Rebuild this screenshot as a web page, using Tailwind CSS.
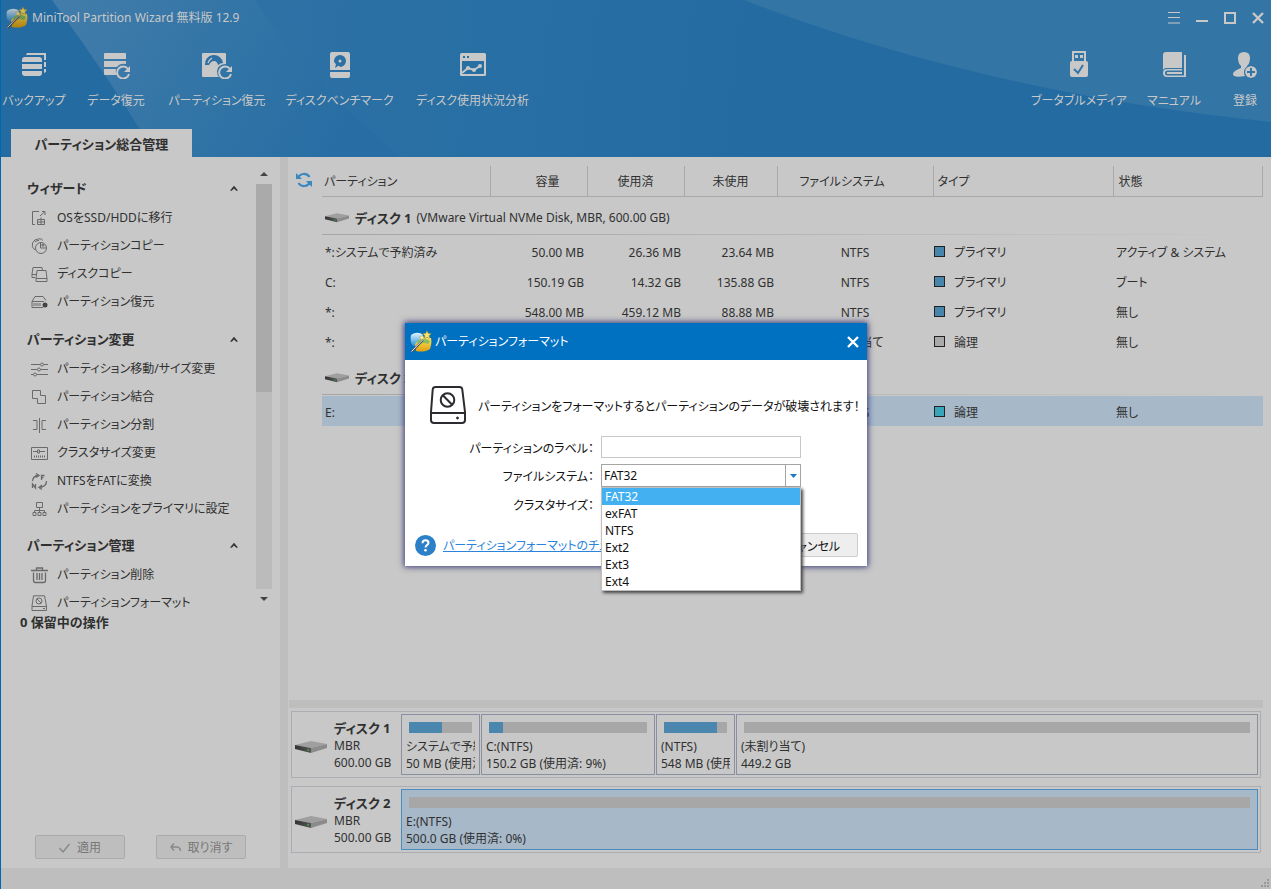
<!DOCTYPE html>
<html lang="ja">
<head>
<meta charset="utf-8">
<title>MiniTool Partition Wizard</title>
<script src="https://cdn.jsdelivr.net/npm/@tailwindcss/browser@4"></script>
</head>
<body class="flex h-screen flex-col overflow-hidden border-l border-[#0067b0] bg-[#c8c8c8] font-['Noto_Sans','Noto_Sans_CJK_JP',sans-serif] text-xs leading-4 text-[#303030] [font-feature-settings:'palt']">

<svg class="absolute h-0 w-0" aria-hidden="true">
  <defs>
    <linearGradient id="gold" x1="0" y1="0" x2="0" y2="1"><stop offset="0" stop-color="#ffe45c"/><stop offset="1" stop-color="#e0a010"/></linearGradient>
    <linearGradient id="sky" x1="0" y1="0" x2="0" y2="1"><stop offset="0" stop-color="#e2f4ff"/><stop offset="1" stop-color="#2a90dc"/></linearGradient>
    <linearGradient id="side" x1="0" y1="0" x2="1" y2="0"><stop offset="0" stop-color="#333"/><stop offset="1" stop-color="#555"/></linearGradient>
  </defs>
  <symbol id="logo" viewBox="0 0 22 22">
    <path d="M1 4c4-3 9-3 12 0v9L3 15c-2-2-3-7-2-11z" fill="url(#sky)"/>
    <path d="M5 13c4-5 10-7 16-6 1 4 0 8-1 11-4 3-10 3-14 2z" fill="url(#gold)"/>
    <path d="M7 10c4-3 9-3 13 0l-2 3c-4-2-7-1-10 1z" fill="#58b868" opacity=".7"/>
    <path d="M17 0l1.200 2.500 2.800.2-2 2 .6 2.800-2.600-1.300-2.400 1.400.4-2.800-2-2 2.800-.4z" fill="#ffe66a" stroke="#c89a20" stroke-width=".5"/>
    <path d="M12 4l.8 1.600 1.800.3-1.300 1.300.3 1.800-1.600-.9-1.600.9.3-1.800-1.300-1.300 1.800-.3z" fill="#fff0a0" stroke="#c89a20" stroke-width=".4"/>
    <path d="M1.500 21L13 9" stroke="#555" stroke-width="2"/><path d="M1.500 20.500L13 8.500" stroke="#e8e8e8" stroke-width="1"/>
  </symbol>
  <symbol id="drive" viewBox="0 0 32 13">
    <path d="M0 4L16 0l16 3-16 4z" fill="#9f9f9f"/>
    <path d="M0 4l16 3v5L0 8z" fill="url(#side)"/>
    <path d="M16 7l16-4v4L16 12z" fill="#8b8b8b"/>
    <circle cx="13" cy="9" r="1" fill="#3aa04a"/>
  </symbol>
  <symbol id="up" viewBox="0 0 8 6"><path d="M0 5.500L4 .8l4 4.700-1.800.3L4 3.500 1.800 5.800z" fill="#333"/></symbol>
</svg>

<header class="relative flex h-[157px] shrink-0 flex-col bg-[#236ba1] text-[#c8c8c8]">
  <svg class="absolute inset-0 h-full w-full" viewBox="0 0 1271 157" preserveAspectRatio="none" aria-hidden="true">
    <defs>
      <linearGradient id="beam" x1="50" y1="0" x2="330" y2="157" gradientUnits="userSpaceOnUse"><stop offset="0" stop-color="#437dab"/><stop offset=".5" stop-color="#3375a6"/><stop offset="1" stop-color="#286ea4"/></linearGradient>
      <linearGradient id="wash" x1="255" y1="0" x2="760" y2="60" gradientUnits="userSpaceOnUse"><stop offset="0" stop-color="#2e71a5"/><stop offset=".5" stop-color="#276fa4"/><stop offset="1" stop-color="#236ba1"/></linearGradient>
    </defs>
    <path d="M255 0H800V157H400Q315 90 255 0z" fill="url(#wash)"/>
    <path d="M51 0H255Q315 90 400 157H156Q110 80 51 0z" fill="url(#beam)"/>
    <path d="M743 0Q980 92 1271 122V0z" fill="#3375a5"/>
  </svg>
  <div class="relative flex h-[33px] items-center pl-[5px] pr-[7px] pt-[2px]">
    <svg class="h-[22px] w-[22px] brightness-80"><use href="#logo"/></svg>
    <h1 class="ml-1 text-xs">MiniTool Partition Wizard 無料版 12.9</h1>
    <div class="ml-auto flex gap-4">
      <button aria-label="メニュー"><svg class="h-3 w-3" viewBox="0 0 12 12"><path d="M0 .5h12M0 5.500h12M0 11h12" stroke="#c8c8c8"/></svg></button>
      <button aria-label="最小化"><svg class="h-3 w-3" viewBox="0 0 12 12"><path d="M0 9h12" stroke="#c8c8c8" stroke-width="2"/></svg></button>
      <button aria-label="最大化"><svg class="h-3 w-3" viewBox="0 0 12 12"><path d="M1 1h10v10H1z" fill="none" stroke="#c8c8c8" stroke-width="2"/></svg></button>
      <button aria-label="閉じる"><svg class="h-3 w-3" viewBox="0 0 12 12"><path d="M1 1l10 10M11 1L1 11" stroke="#c8c8c8" stroke-width="2.400"/></svg></button>
    </div>
  </div>
  <nav class="relative flex h-24 gap-[26px] whitespace-nowrap pl-[5px] pr-[6px] pt-[18px]">
    <button class="flex w-[56px] flex-col items-center gap-[14px]">
      <svg class="h-7 w-7" viewBox="0 0 28 28" fill="#c8c8c8"><path d="M2 9q0-3 3-3h14q3 0 3 3v2H2zM2 13h20v5H2zM2 20h20v2q0 3-3 3H5q-3 0-3-3z"/><path d="M7 2h19v7h-2V4H6zM24 11h2v5h-2zM24 18h2v3l-2 1z"/></svg>
      <span>バックアップ</span>
    </button>
    <button class="flex w-[56px] flex-col items-center gap-[14px]">
      <svg class="h-7 w-7" viewBox="0 0 28 28"><path d="M3 2h20q1 0 1 1v5H2V3q0-1 1-1zM2 10h22v3q-6-1-9 3H2zM2 18h12q-1 3 1 6H3q-1 0-1-1z" fill="#c8c8c8"/><path d="M26 18a6 6 0 1 0 1 5" fill="none" stroke="#c8c8c8" stroke-width="2"/><path d="M28 15v6h-6z" fill="#c8c8c8"/></svg>
      <span>データ復元</span>
    </button>
    <button class="flex w-[94px] flex-col items-center gap-[14px]">
      <svg class="h-7 w-[30px]" viewBox="0 0 30 28"><path d="M1 2h22q1 0 1 1v10q-8 0-9 7 0 4 2 6H1q-1 0-1-1V3q0-1 1-1z" fill="#c8c8c8"/><path d="M3 14a9 9 0 0 1 18-2q-3 0-5 2-1-4-4-4t-5 4z" fill="#2c70a4"/><path d="M6 12q1-3 4-5" stroke="#c8c8c8" stroke-width="1.500" fill="none"/><circle cx="12" cy="12" r="1.800" fill="#c8c8c8"/><path d="M28 18a6 6 0 1 0 1 5" fill="none" stroke="#c8c8c8" stroke-width="2"/><path d="M30 15v6h-6z" fill="#c8c8c8"/></svg>
      <span>パーティション復元</span>
    </button>
    <button class="flex w-[99px] flex-col items-center gap-[14px]">
      <svg class="h-7 w-5" viewBox="0 0 20 28"><path d="M2 1h16q2 0 2 2v16H0V3q0-2 2-2zM0 21h20v4q0 2-2 2H2q-2 0-2-2z" fill="#c8c8c8"/><path d="M4 10a6 6 0 1 1 6 6q-1-2-2-1l-3 2 1-4q-2-1-2-3z" fill="#2a70a4"/><circle cx="10" cy="10" r="1.500" fill="#c8c8c8"/></svg>
      <span>ディスクベンチマーク</span>
    </button>
    <button class="flex w-[115px] flex-col items-center gap-[14px]">
      <svg class="h-7 w-[26px]" viewBox="0 0 26 28"><path d="M1.500 2h23q1.500 0 1.500 1.500v20q0 1.500-1.500 1.500h-23Q0 25 0 23.500v-20Q0 2 1.500 2z" fill="#c8c8c8"/><path d="M3 5h2v2H3zM7 5h2v2H7zM2 10h22v13H2z" fill="#2870a4"/><path d="M2 22l6-5 6 2 6-4" fill="none" stroke="#c8c8c8" stroke-width="2"/><circle cx="8" cy="17" r="2" fill="#c8c8c8"/><circle cx="14" cy="19" r="2" fill="#c8c8c8"/><circle cx="20" cy="15" r="2" fill="#c8c8c8"/></svg>
      <span>ディスク使用状況分析</span>
    </button>
    <button class="ml-auto flex w-[88px] flex-col items-center gap-[14px]">
      <svg class="h-7 w-[18px]" viewBox="0 0 18 28"><path d="M2 0h14v11H2z" fill="#c8c8c8"/><path d="M4 2h10v8H4z" fill="#3375a5"/><path d="M5 4h3v3H5zM10 4h3v3h-3z" fill="#c8c8c8"/><path d="M2 10h14q2 0 2 2v12q0 2-2 2H2q-2 0-2-2V12q0-2 2-2z" fill="#c8c8c8"/><path d="M4 18l4 4 5-8" fill="none" stroke="#3375a5" stroke-width="2"/></svg>
      <span>ブータブルメディア</span>
    </button>
    <button class="flex w-[50px] flex-col items-center gap-[14px]">
      <svg class="h-7 w-6" viewBox="0 0 24 28" fill="#c8c8c8"><path d="M4 1h16v16H4q-2 0-3 2V4q0-3 3-3zM22 4h2v22H5q-4 0-4-4t4-4h15v1.500H5q-2 0-2 2.500t2 2.500h17z"/><path d="M5 21h15v2H5z"/></svg>
      <span>マニュアル</span>
    </button>
    <button class="flex w-[40px] flex-col items-center gap-[14px]">
      <svg class="h-7 w-6" viewBox="0 0 24 28"><path d="M11 1q6 0 6 6 0 5-3 8v2q-4 3-2 8-12 2-12-2 0-3 8-6v-2Q5 12 5 7q0-6 6-6z" fill="#c8c8c8"/><circle cx="18" cy="21" r="6" fill="#c8c8c8"/><circle cx="18" cy="21" r="6.500" fill="none" stroke="#3375a5"/><path d="M18 17v8M14 21h8" stroke="#3375a5" stroke-width="2"/></svg>
      <span>登録</span>
    </button>
  </nav>
  <div role="tablist" class="relative flex pl-[10px]">
    <button role="tab" aria-selected="true" class="h-7 w-[181px] whitespace-nowrap bg-[#c8c8c8] pt-[2px] text-[13px] font-bold text-[#303030]">パーティション総合管理</button>
  </div>
</header>

<div class="flex min-h-0 flex-1">
  <aside class="flex w-[279px] shrink-0 flex-col">
    <div class="flex h-[455px]">
      <div class="flex min-w-0 flex-1 flex-col overflow-hidden pt-[14px] [&_a]:flex [&_a]:h-7 [&_a]:shrink-0 [&_a]:items-center [&_a]:gap-[9px] [&_a]:whitespace-nowrap [&_a]:pl-[30px] [&_a]:pt-[2px] [&_h2]:flex [&_h2]:h-[30px] [&_h2]:shrink-0 [&_h2]:items-center [&_h2]:justify-between [&_h2]:pl-[26px] [&_h2]:pr-[18px] [&_h2]:text-[13px] [&_h2]:font-bold [&_a_svg]:h-[17px] [&_a_svg]:w-[17px] [&_a_svg]:fill-none [&_a_svg]:stroke-[#6a6a6a]">
        <h2 class="mt-[2px]">ウィザード<svg class="h-[6px] w-2"><use href="#up"/></svg></h2>
        <a href="#"><svg viewBox="0 0 17 17"><path d="M8 1.500H1.500v13H4M9 6l5-4.500M11 1.500h3V5M6.500 9.500h7v5h-7zM10 7.500v7M6.500 12h7"/></svg>OSをSSD/HDDに移行</a>
        <a href="#"><svg viewBox="0 0 17 17"><circle cx="10" cy="10" r="5.500"/><path d="M9.500 4.500V10H15M11 6q2 0 2 2h-2zM4 12Q0 9 1.500 5T8 .8q3-.3 4 1.700M4 4q2-2 4-1.500"/></svg>パーティションコピー</a>
        <a href="#"><svg viewBox="0 0 17 17"><path d="M2 1.500h9l.5 3M2 1.500L1 8v3.500h3M6 4.500h9l1 8v3H5v-3zM5 12.500h11M1 8.500h4"/></svg>ディスクコピー</a>
        <a href="#"><svg viewBox="0 0 17 17"><path d="M1 7.500L4 2.500h8l3 4M1 7.500h12M1 7.500v6h11M3 9v3M5 9v3M7 9v3M9 9v3"/><circle cx="14" cy="11" r="2.500" fill="#444" stroke="none"/></svg>パーティション復元</a>
        <h2 class="mt-[9px]">パーティション変更<svg class="h-[6px] w-2"><use href="#up"/></svg></h2>
        <a href="#"><svg viewBox="0 0 17 17"><path d="M0 3.500h9M13 3.500h4M0 8.500h6M10 8.500h7M0 13.500h2M6 13.500h11"/><circle cx="11" cy="3.500" r="1.500"/><circle cx="8" cy="8.500" r="1.500"/><circle cx="4" cy="13.500" r="1.500"/></svg>パーティション移動/サイズ変更</a>
        <a href="#"><svg viewBox="0 0 17 17"><path d="M1.500 1.500h8v5h5v8h-8v-5h-5z"/></svg>パーティション結合</a>
        <a href="#"><svg viewBox="0 0 17 17"><path d="M8.500 1v15M2 3.500h4v9H2M15 3.500h-4v9h4"/></svg>パーティション分割</a>
        <a href="#"><svg viewBox="0 0 17 17"><path d="M.5 2.500h16v12H.5zM2 6.500h4M9 6.500h5M6.500 5h2v3h-2z"/><path d="M3 11.500h12" stroke-dasharray="1 1" stroke-width="2"/></svg>クラスタサイズ変更</a>
        <a href="#"><svg viewBox="0 0 17 17"><path d="M1.500 8Q2 3 7 2.500M5 .5l3 2-3 2M15.500 8q0 5-6 6.500M11 12l-3 2.500 3 2M10.500 7V2.500h3M10.500 4.500h2M1.500 15v-4l3 4v-4" stroke-width="1.300"/></svg>NTFSをFATに変換</a>
        <a href="#"><svg viewBox="0 0 17 17"><path d="M5.500 1.500h6v5h-6zM8.500 6.500v5M3.500 11.500v-2h10v2M2 11.500h3v3H2zM7 11.500h3v3H7zM12 11.500h3v3h-3z"/></svg>パーティションをプライマリに設定</a>
        <h2 class="mt-[8px]">パーティション管理<svg class="h-[6px] w-2"><use href="#up"/></svg></h2>
        <a href="#"><svg viewBox="0 0 17 17"><path d="M0 3.500h17M5.500 3V1h6v2M2.500 5.500v8q0 2 2 2h8q2 0 2-2v-8M6 6v7M8.500 6v7M11 6v7" stroke-width="1.300"/></svg>パーティション削除</a>
        <a href="#"><svg viewBox="0 0 17 17"><path d="M2.500.8h11l2 10.200v4.500H1V11zM1 11.500h15M12 13.500h2"/><circle cx="8" cy="6" r="3"/><path d="M6 4l4 4"/></svg>パーティションフォーマット</a>
      </div>
      <div class="mr-2 flex w-4 flex-col items-center pb-[7px] pt-[15px]" aria-hidden="true">
        <svg class="h-[12px] w-2" viewBox="0 0 8 12"><path d="M0 4l4-4 4 4z" fill="#444"/></svg>
        <div class="h-[208px] w-4 bg-[#aaa]"></div>
        <div class="w-4 flex-1 bg-[#bbb]"></div>
        <svg class="mt-2 h-2 w-2" viewBox="0 0 8 8"><path d="M0 0h8L4 4z" fill="#444"/></svg>
      </div>
    </div>
    <p class="pl-[19px] pt-[2px] text-[13px] font-bold">0 保留中の操作</p>
    <div class="mt-auto flex gap-[31px] pb-[9px] pl-[34px] text-[#777]">
      <button disabled class="flex h-[24px] w-[90px] items-center justify-center gap-[7px] rounded-xs border border-[#aaa] bg-[#bebebe] pt-[2px]"><svg class="h-[10px] w-[11px]" viewBox="0 0 11 10"><path d="M.5 5l3.500 4L10.500 1" fill="none" stroke="#888" stroke-width="1.400"/></svg>適用</button>
      <button disabled class="flex h-[24px] w-[90px] items-center justify-center gap-[7px] rounded-xs border border-[#aaa] bg-[#bebebe] pt-[2px]"><svg class="h-[10px] w-[11px]" viewBox="0 0 11 10"><path d="M4 .5L1 4l3 3.500M1 4h6q3 0 3.500 4" fill="none" stroke="#888" stroke-width="1.400"/></svg>取り消す</button>
    </div>
  </aside>
  <div class="w-2 shrink-0 bg-[#bebebe]"></div>

  <main class="flex min-w-0 flex-1 flex-col">
    <div class="flex flex-1 pl-2 pr-2 pt-[9px]">
      <button class="mt-[6px] h-4 w-[26px] shrink-0" aria-label="更新"><svg class="h-4 w-4" viewBox="0 0 16 16"><path d="M2 6a6.500 6.500 0 0 1 11.500-1M14 10a6.500 6.500 0 0 1-11.500 1" fill="none" stroke="#3a88c0" stroke-width="2.200"/><path d="M0 1v6h6zM16 15V9h-6z" fill="#3a88c0"/></svg></button>
      <div class="min-w-0 flex-1">
      <table class="w-full table-fixed border-collapse whitespace-nowrap [&_td]:px-0 [&_td]:pb-0 [&_td]:pt-[3px] [&_th]:border-b [&_th]:border-r [&_th]:border-[#a9a9a9] [&_th]:p-0 [&_th]:pt-[2px] [&_th]:font-normal">
        <colgroup><col class="w-[168px]"><col class="w-[97px]"><col class="w-[97px]"><col class="w-[93px]"><col class="w-[156px]"><col class="w-[180px]"><col></colgroup>
        <thead><tr class="h-[30px]"><th><div class="pl-[2px] text-left">パーティション</div></th><th><div class="pl-[18px]">容量</div></th><th>使用済</th><th>未使用</th><th><div class="pr-[26px]">ファイルシステム</div></th><th><div class="pl-1 text-left">タイプ</div></th><th><div class="pl-[5px] text-left">状態</div></th></tr></thead>
        <tbody class="[&_.n]:pr-[3px] [&_.n]:text-right [&_.t]:flex [&_.t]:items-start [&_.t]:gap-[9px] [&_.t]:pl-px [&_i]:mt-px [&_i]:h-[11px] [&_i]:w-[11px] [&_i]:border [&_i]:border-[#222] [&_i]:bg-[#4785ad]">
          <tr class="h-10"><td colspan="7" class="pt-0!"><div class="flex h-[38px] flex-col"><div class="flex flex-1 items-center pl-[3px] pt-[5px]"><svg class="h-3 w-6"><use href="#drive" width="24" height="12"/></svg><b class="ml-[6px] text-[13px]">ディスク 1</b><span class="ml-[5px]">(VMware Virtual NVMe Disk, MBR, 600.00 GB)</span></div><div class="h-px bg-linear-to-r from-[#a5a5a5] to-[#c8c8c8]"></div></div></td></tr>
          <tr class="h-[30px]"><td><div class="pl-[3px]">*:システムで予約済み</div></td><td><div class="n">50.00 MB</div></td><td><div class="n">26.36 MB</div></td><td><div class="n">23.64 MB</div></td><td class="text-center">NTFS</td><td><div class="t"><i></i>プライマリ</div></td><td><div class="pl-[3px]">アクティブ &amp; システム</div></td></tr>
          <tr class="h-[30px]"><td><div class="pl-[3px]">C:</div></td><td><div class="n">150.19 GB</div></td><td><div class="n">14.32 GB</div></td><td><div class="n">135.88 GB</div></td><td class="text-center">NTFS</td><td><div class="t"><i></i>プライマリ</div></td><td><div class="pl-[3px]">ブート</div></td></tr>
          <tr class="h-[30px]"><td><div class="pl-[3px]">*:</div></td><td><div class="n">548.00 MB</div></td><td><div class="n">459.12 MB</div></td><td><div class="n">88.88 MB</div></td><td class="text-center">NTFS</td><td><div class="t"><i></i>プライマリ</div></td><td><div class="pl-[3px]">無し</div></td></tr>
          <tr class="h-[30px]"><td><div class="pl-[3px]">*:</div></td><td></td><td></td><td></td><td class="text-center">未割り当て</td><td><div class="t"><i class="bg-[#aaa]!"></i>論理</div></td><td><div class="pl-[3px]">無し</div></td></tr>
          <tr class="h-10"><td colspan="7" class="pt-0!"><div class="flex h-[38px] flex-col"><div class="flex flex-1 items-center pl-[3px] pt-[5px]"><svg class="h-3 w-6"><use href="#drive" width="24" height="12"/></svg><b class="ml-[6px] text-[13px]">ディスク 2</b></div><div class="h-px bg-linear-to-r from-[#a5a5a5] to-[#c8c8c8]"></div></div></td></tr>
          <tr class="h-[30px] bg-[#a7b8c9]"><td><div class="pl-[3px]">E:</div></td><td></td><td></td><td></td><td class="text-center">NTFS</td><td><div class="t"><i class="bg-[#3aa5b8]!"></i>論理</div></td><td><div class="pl-[3px]">無し</div></td></tr>
        </tbody>
      </table>
      </div>
    </div>
    <div class="ml-px mr-2 h-2 bg-[#bebebe]"></div>
    <div class="flex flex-col gap-2 pb-[15px] pl-[3px] pr-[10px] pt-[3px] leading-[17px]">
      <section class="flex h-[67px] border border-[#acacb2] p-[2px]">
        <div class="flex w-[107px] items-center gap-[7px] whitespace-nowrap pl-px pt-px"><svg class="mt-1 h-[13px] w-8"><use href="#drive"/></svg><div><b class="text-[13px]">ディスク 1</b><br>MBR<br>600.00 GB</div></div>
        <div class="flex min-w-0 flex-1 gap-px whitespace-nowrap [&>div]:border [&>div]:border-[#8a90a0] [&>div]:px-1 [&>div]:pt-[7px] [&_p]:overflow-hidden">
          <div class="w-[79px]"><div class="mx-[3px] mb-[5px] h-[11px] bg-[#a7a7a7]"><div class="h-full bg-[#4a86ae]" style="width:53%"></div></div><p>システムで予約済み</p><p>50 MB (使用済: 53%)</p></div>
          <div class="w-[174px]"><div class="mx-[3px] mb-[5px] h-[11px] bg-[#a7a7a7]"><div class="h-full bg-[#4a86ae]" style="width:9%"></div></div><p>C:(NTFS)</p><p>150.2 GB (使用済: 9%)</p></div>
          <div class="w-[79px]"><div class="mx-[3px] mb-[5px] h-[11px] bg-[#a7a7a7]"><div class="h-full bg-[#4a86ae]" style="width:84%"></div></div><p>(NTFS)</p><p>548 MB (使用済: 84%)</p></div>
          <div class="min-w-0 flex-1"><div class="mx-[3px] mb-[5px] h-[11px] bg-[#a7a7a7]"></div><p>(未割り当て)</p><p>449.2 GB</p></div>
        </div>
      </section>
      <section class="flex h-[67px] border border-[#acacb2] p-[2px]">
        <div class="flex w-[107px] items-center gap-[7px] whitespace-nowrap pl-px pt-px"><svg class="mt-1 h-[13px] w-8"><use href="#drive"/></svg><div><b class="text-[13px]">ディスク 2</b><br>MBR<br>500.00 GB</div></div>
        <div class="min-w-0 flex-1 border border-[#4a8cc0] bg-[#a7b8c9] px-1 pt-[7px]"><div class="mx-[3px] mb-[5px] h-[11px] bg-[#a7a7a7]"></div><p>E:(NTFS)</p><p>500.0 GB (使用済: 0%)</p></div>
      </section>
    </div>
  </main>
</div>
<footer class="flex h-[21px] shrink-0 items-end justify-end bg-[#bebebe] p-[2px]"><svg class="h-2 w-2" viewBox="0 0 8 8" fill="#999"><path d="M6 0h2v2H6zM3 3h2v2H3zM6 3h2v2H6zM0 6h2v2H0zM3 6h2v2H3zM6 6h2v2H6z"/></svg></footer>

<div role="dialog" aria-labelledby="dlg" class="absolute left-[405px] top-[323px] w-[462px] bg-white text-[#111] shadow-[0_0_6px_1px_#3a3a78]">
  <div class="flex h-[37px] items-center bg-[#0070c0] pl-[5px] pr-2 text-white">
    <svg class="h-[22px] w-[22px]"><use href="#logo"/></svg>
    <h2 id="dlg" class="ml-[3px]">パーティションフォーマット</h2>
    <button class="ml-auto" aria-label="閉じる"><svg class="h-3 w-3" viewBox="0 0 12 12"><path d="M1 1l10 10M11 1L1 11" stroke="#fff" stroke-width="2.400"/></svg></button>
  </div>
  <div class="flex items-center gap-3 whitespace-nowrap pb-[12px] pl-[25px] pt-[26px]">
    <svg class="h-[38px] w-[36px]" viewBox="0 0 36 38" fill="none" stroke="#2c2c30" stroke-width="2"><path d="M5.500 1h24q2.500 0 2.800 2.500L35 26v8q0 3-3 3H4q-3 0-3-3v-8L2.700 3.500Q3 1 5.500 1zM1 27h34"/><circle cx="17.500" cy="14" r="6.800"/><path d="M12.800 9.300l9.400 9.400"/><circle cx="27.500" cy="32" r="1" fill="#2c2c30" stroke-width="1"/></svg>
    <p class="pt-1">パーティションをフォーマットするとパーティションのデータが破壊されます！</p>
  </div>
  <div class="grid grid-cols-[189px_200px] items-center gap-x-[7px] gap-y-[6px] whitespace-nowrap">
    <label for="lbl" class="pt-[3px] text-right">パーティションのラベル：</label>
    <input id="lbl" type="text" class="h-[22px] border border-[#c8c8c8] bg-white px-[2px]">
    <label for="fs" class="pt-[3px] text-right">ファイルシステム：</label>
    <div class="relative">
      <select id="fs" class="block h-[23px] w-full appearance-none border border-[#a5a5a5] bg-white px-[2px] outline-none"><option>FAT32</option></select>
      <div class="pointer-events-none absolute inset-y-px right-px flex w-[15px] items-center justify-center border-l border-[#a5a5a5]"><svg class="h-1 w-[7px]" viewBox="0 0 7 4"><path d="M0 0h7L3.500 4z" fill="#1e78c8"/></svg></div>
      <ul role="listbox" aria-label="ファイルシステム" class="absolute left-0 top-full z-10 w-full border border-[#c0c0c0] bg-white leading-[17px] shadow-[2px_2px_3px_#444] [&_li]:px-[3px]">
        <li role="option" aria-selected="true" class="bg-[#43b0f1] text-white">FAT32</li><li role="option">exFAT</li><li role="option">NTFS</li><li role="option">Ext2</li><li role="option">Ext3</li><li role="option">Ext4</li>
      </ul>
    </div>
    <span class="pt-[5px] text-right">クラスタサイズ：</span>
  </div>
  <div class="flex items-center whitespace-nowrap pb-[9px] pl-[10px] pr-[9px] pt-[19px]">
    <svg class="h-[21px] w-[21px]" viewBox="0 0 21 21"><circle cx="10.500" cy="10.500" r="10.500" fill="#2c80c8"/><path d="M7.500 8.300q0-3 3-3t3 2.500q0 1.400-1.500 2.400t-1.500 2.300" fill="none" stroke="#fff" stroke-width="2"/><circle cx="10.500" cy="15.300" r="1.300" fill="#fff"/></svg>
    <a href="#" class="ml-[7px] pt-[2px] text-[#2b84dc] underline">パーティションフォーマットのチュートリアル</a>
    <button class="ml-auto h-[24px] w-[90px] rounded-xs border border-[#ccc] bg-[#eee] pt-[3px]">キャンセル</button>
  </div>
</div>
</body>
</html>
